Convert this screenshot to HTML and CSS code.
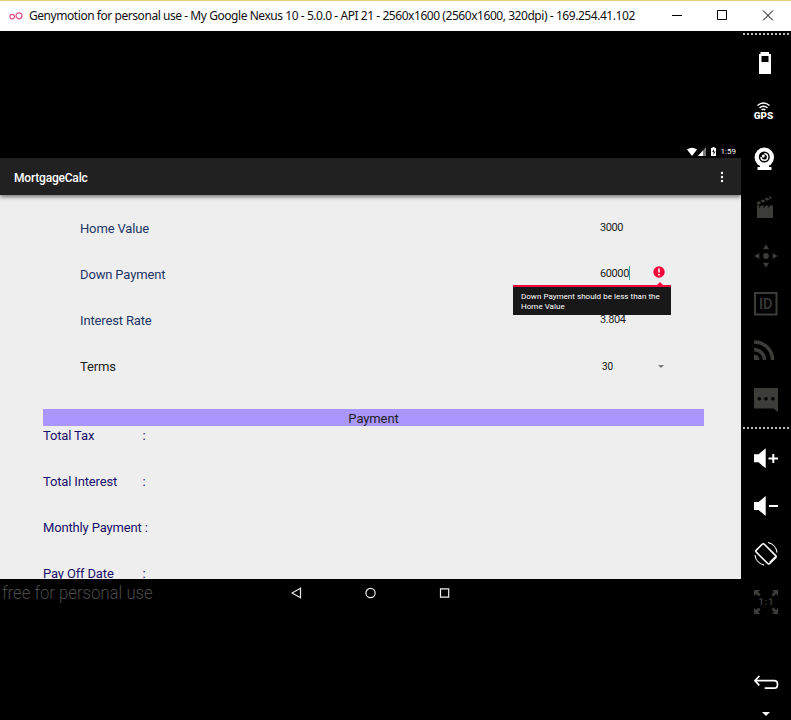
FILE: index.html
```html
<!DOCTYPE html>
<html lang="en">
<head>
<meta charset="utf-8">
<title>Genymotion for personal use</title>
<link rel="stylesheet" href="styles.css">
</head>
<body>
<div class="window">
  <header class="titlebar">
    <svg class="logo" viewBox="0 0 14 10"><circle cx="3.2" cy="5.6" r="2.3"/><circle cx="10" cy="4.8" r="3"/></svg>
    <h1 class="window-title">Genymotion for personal use - My Google Nexus 10 - 5.0.0 - API 21 - 2560x1600 (2560x1600, 320dpi) - 169.254.41.102</h1>
    <svg class="controls" viewBox="0 0 121 30"><path d="M2 14.500h10M47.500 9.500h9v9h-9zM93 9.500l10 10M103 9.500l-10 10"/></svg>
  </header>
  <div class="workspace">
    <main class="device">
      <div class="statusbar">
        <svg class="status-icons" viewBox="0 0 32 10">
          <path d="M0 2.500Q5 -1 10 2.500L5 9z"/>
          <path class="dim" d="M19 0v9h-8z"/><path d="M16 3.500V9h-5z"/>
          <path d="M24 1h1.500V0h2v1H29v8h-5z"/><path class="bolt" d="M27 2l-2 3h1.500v3l2-3.500H27z"/>
        </svg>
        <span>1:59</span>
      </div>
      <div class="appbar">
        <h2 class="app-title">MortgageCalc</h2>
        <svg class="overflow" viewBox="0 0 4 12"><circle cx="2" cy="2" r="1.200"/><circle cx="2" cy="6" r="1.200"/><circle cx="2" cy="10" r="1.200"/></svg>
      </div>
      <div class="content">
        <div class="form">
          <div class="row"><span class="label">Home Value</span><span class="value">3000</span></div>
          <div class="row">
            <span class="label">Down Payment</span>
            <span class="value focused">60000<i class="caret"></i>
              <svg class="error-icon" viewBox="0 0 12 12"><circle cx="6" cy="6" r="5.700"/><path d="M6 2.500v4M6 8v1.500"/></svg>
              <span class="error-tip">Down Payment should be less than the Home Value</span>
            </span>
          </div>
          <div class="row"><span class="label">Interest Rate</span><span class="value">3.804</span></div>
          <div class="row"><span class="label terms">Terms</span><span class="value spinner">30<svg class="arrow" viewBox="0 0 6 3"><path d="M0 0h6L3 3z"/></svg></span></div>
        </div>
        <div class="payment-heading">Payment</div>
        <div class="results">
          <div class="result"><span class="result-name">Total Tax</span><span>:</span></div>
          <div class="result"><span class="result-name">Total Interest</span><span>:</span></div>
          <div class="result"><span>Monthly Payment :</span></div>
          <div class="result"><span class="result-name">Pay Off Date</span><span>:</span></div>
        </div>
      </div>
      <div class="navbar">
        <span class="watermark">free for personal use</span>
        <svg class="nav-icons" viewBox="0 0 160 12"><path d="M9.500 1.200v9.600L1 6z"/><circle cx="79.500" cy="6" r="4.600"/><path d="M149.500 1.900h8.200v8.200h-8.200z"/></svg>
      </div>
    </main>
    <aside class="tools">
      <div class="dots"></div>
      <svg class="tool" viewBox="0 0 50 48"><path fill-rule="evenodd" d="M18 15h1.500v-2h8.500v2h2v20H18zM20.500 17v6h7v-6z"/></svg>
      <svg class="tool" viewBox="0 0 50 48"><g class="line"><path d="M16.500 18.500q6-5 12 0M18.500 20.900q4-3.200 8 0M20.700 23q1.800-1.500 3.600 0" stroke-width="1.500"/></g><text x="12.700" y="32" class="gps" textLength="19.500" lengthAdjust="spacingAndGlyphs">GPS</text></svg>
      <svg class="tool" viewBox="0 0 50 48"><circle cx="23.300" cy="22.300" r="9.700"/><path d="M19 29h9v3h2.500v3h-14v-3H19z"/><circle class="cut" cx="23.300" cy="22" r="5.500"/><path class="line" stroke-width="1.500" d="M23.300 18.700a3.300 3.300 0 1 1-3.300 3.300"/><circle cx="22.300" cy="21" r="1.500"/></svg>
      <svg class="tool off" viewBox="0 0 50 48"><path d="M16 22.500h16v12.500H16zM15.500 19.500l14-6.500 1.300 2.500-14 6.500z"/><path class="cutline" d="M18.500 17.500l3 3M22.500 15.500l3 3M26.500 13.700l3 3M20 22l-2 2.500M24.500 22l-2 2.500M29 22l-2 2.500"/></svg>
      <svg class="tool off" viewBox="0 0 50 48"><circle cx="25" cy="25" r="2.900"/><path d="M25 13.200l3 5h-6zM25 36.800l3-5h-6zM13.300 25l5-3v6zM36.700 25l-5-3v6z"/></svg>
      <svg class="tool off" viewBox="0 0 50 48"><rect class="line" x="14" y="14" width="21.500" height="21.500" stroke-width="2"/><text x="18" y="30" class="id" textLength="13.500" lengthAdjust="spacingAndGlyphs">ID</text></svg>
      <svg class="tool off" viewBox="0 0 50 48"><path d="M13 27.500a6 6 0 0 1 5.500 5.500H13z"/><path class="line" stroke-width="3.500" d="M13 22.500A10.500 10.500 0 0 1 23.500 33M13 15A18 18 0 0 1 31.500 33"/></svg>
      <svg class="tool off" viewBox="0 0 50 48"><path d="M13 13h24v24l-4.500-3.500H13z"/><g class="cut"><circle cx="18.300" cy="23.800" r="1.800"/><circle cx="25" cy="23.800" r="1.800"/><circle cx="31.900" cy="23.800" r="1.800"/></g></svg>
      <div class="dots middle"></div>
      <svg class="tool" viewBox="0 0 50 48"><path d="M13 20.300h4.500l7.200-6v20l-7.200-6H13z"/><path class="line" stroke-width="2" d="M27.500 24.500h9.500M32.300 20v9"/></svg>
      <svg class="tool" viewBox="0 0 50 48"><path d="M13 20h4.500l7.200-6v20l-7.200-6H13z"/><path class="line" stroke-width="2" d="M28 24h9"/></svg>
      <svg class="tool" viewBox="0 0 50 48"><g class="line" stroke-width="1.600"><rect x="15.500" y="18.300" width="19" height="11.200" rx="1.500" transform="rotate(45 25 23.900)"/><path stroke-width="1.100" d="M27 12.500a11.500 11.500 0 0 1 9 10M23 35a11.500 11.500 0 0 1-9-10M28.500 32.500l5.500-5.500"/></g></svg>
      <svg class="tool off" viewBox="0 0 50 48"><path d="M13 12h6l-2 2 2.500 2.500-2 2L15 16l-2 2zM37 12h-6l2 2-2.500 2.500 2 2L35 16l2 2zM13 36h6l-2-2 2.500-2.500-2-2L15 32l-2-2zM37 36h-6l2-2-2.500-2.500 2-2L35 32l2-2z"/><text x="17.500" y="27.300" class="ratio" textLength="15">1:1</text></svg>
      <svg class="tool back" viewBox="0 0 50 48"><path class="line" stroke-width="1.700" d="M18.300 17L14 21.700l4.300 4.600M14 21.700h19.300q3.200 0 3.200 3.700t-3.200 3.700H23.700"/></svg>
      <svg class="more" viewBox="0 0 8 4"><path d="M0 0h8L4 4z"/></svg>
    </aside>
  </div>
</div>
</body>
</html>
```
FILE: styles.css
```css
* { box-sizing: border-box; }
body { margin: 0; background: #000; font-family: Roboto, sans-serif; }
h1, h2 { margin: 0; font-weight: 400; }
svg { display: block; flex: none; }
.window { width: 791px; height: 720px; overflow: hidden; display: flex; flex-direction: column; }

.titlebar { height: 31px; flex: none; display: flex; align-items: center; background: #fff; border-top: 1px solid #e6d077; padding-left: 9px; }
.logo { width: 14px; height: 10px; margin-right: 6px; fill: none; stroke: #e0527e; stroke-width: 1.2; }
.window-title { width: 641px; flex: none; font: 12px/30px "Noto Sans", sans-serif; letter-spacing: -0.445px; color: #111; white-space: nowrap; }
.controls { width: 121px; height: 30px; fill: none; stroke: #000; stroke-width: 1; }

.workspace { flex: 1; display: flex; min-height: 0; }
.device { width: 741px; padding-top: 115px; }
.statusbar { height: 12px; display: flex; justify-content: flex-end; align-items: center; gap: 2px; padding-right: 5px; color: #fff; font-size: 8px; line-height: 12px; }
.status-icons { width: 32px; height: 10px; fill: #fff; }
.dim { fill: #777; }
.bolt { fill: #222; }
.appbar { position: relative; height: 37px; display: flex; align-items: center; justify-content: space-between; padding: 0 17px 0 14px; background: #212121; box-shadow: 0 2px 4px rgba(0, 0, 0, .5); clip-path: inset(0 0 -8px 0); }
.app-title { padding-top: 2px; font-size: 12px; font-weight: 500; line-height: 14px; letter-spacing: -0.2px; color: #fff; }
.overflow { width: 4px; height: 12px; fill: #fff; }

.content { height: 384px; overflow: hidden; padding: 11px 37px 0 43px; background: #eee; color: #222; }
.form { height: 203px; padding-left: 37px; }
.row { height: 46px; display: flex; align-items: center; font-size: 13px; }
.label { width: 520px; padding-bottom: 2px; letter-spacing: -0.15px; color: #1d3566; }
.terms { color: #222; }
.value { position: relative; width: 65px; height: 30px; line-height: 27px; font-size: 11px; letter-spacing: -0.4px; }
.focused { border-bottom: 1px solid #80b5ae; height: 26px; line-height: 23px; }
.caret { position: absolute; left: 29px; top: 4px; width: 1px; height: 14px; background: #26a69a; }
.error-icon { position: absolute; left: 53px; top: 4px; width: 12px; height: 12px; fill: #f5063b; stroke: #fff; stroke-width: 1.6; }
.error-icon circle { stroke: none; }
.error-tip { position: absolute; left: -87px; top: 23px; z-index: 2; width: 158px; height: 30px; padding: 5px 8px 0; border-top: 2px solid #f5063b; background: #181818; color: #fff; font-size: 8px; line-height: 10px; letter-spacing: 0.03px; }
.error-tip::before { content: ""; position: absolute; right: 8px; top: -5px; border: solid transparent; border-width: 0 3px 3px; border-bottom-color: #f5063b; }
.spinner { padding-left: 2px; color: #111; line-height: 30px; font-size: 10px; letter-spacing: 0; }
.arrow { position: absolute; left: 58px; top: 13px; width: 6px; height: 3px; fill: #777; }
.payment-heading { width: 661px; height: 17px; background: #aa96ff; text-align: center; font-size: 13px; line-height: 19px; letter-spacing: -0.1px; }
.result { height: 46px; display: flex; font-size: 13px; line-height: 20px; letter-spacing: -0.15px; color: #19106b; white-space: nowrap; }
.result-name { width: 99.5px; }

.navbar { height: 28px; display: flex; align-items: center; }
.watermark { width: 289px; margin-left: 2px; color: #4a4a4a; font-size: 19px; font-weight: 300; line-height: 30px; white-space: nowrap; transform: scaleX(.88); transform-origin: 0 50%; }
.nav-icons { width: 160px; height: 12px; fill: none; stroke: #eee; stroke-width: 1.2; }

.tools { width: 50px; display: flex; flex-direction: column; color: #fff; }
.dots { height: 8px; flex: none; margin: 0 1px 0 2px; background: repeating-linear-gradient(90deg, #bbb 0 2px, transparent 2px 4px) 0 2px / 100% 2px no-repeat; }
.middle { height: 11px; background: repeating-linear-gradient(90deg, #bbb 0 2px, transparent 2px 4px) 0 4px / 100% 2px no-repeat; }
.tool { width: 50px; height: 48px; fill: currentColor; }
.off { color: #3c3c38; }
.line { fill: none; stroke: currentColor; }
.cut { fill: #000; }
.cutline { fill: none; stroke: #000; stroke-width: 1.2; }
.gps { font: 900 9px Roboto, sans-serif; }
.id { font: 500 14px Roboto, sans-serif; }
.ratio { font: 700 9px Roboto, sans-serif; }
.back { margin-top: 33px; }
.more { width: 8px; height: 4px; margin: 5px 0 0 21px; fill: #fff; }
```
